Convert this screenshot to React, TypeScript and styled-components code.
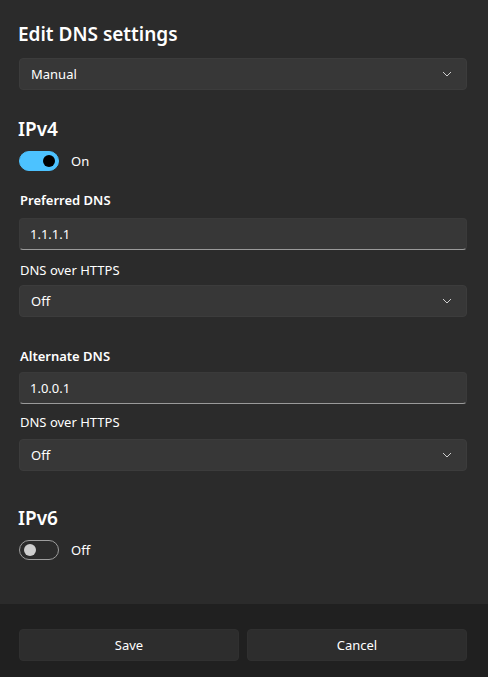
import styled, { createGlobalStyle } from "styled-components";

const GlobalStyle = createGlobalStyle`
  html, body {
    margin: 0;
    padding: 0;
    background: #202020;
  }
  body {
    font-family: "Segoe UI", "Noto Sans", "Liberation Sans", sans-serif;
    color: #ffffff;
    -webkit-font-smoothing: antialiased;
  }
`;

const Dialog = styled.div`
  width: 488px;
  height: 677px;
  display: flex;
  flex-direction: column;
  overflow: hidden;
`;

const Content = styled.div`
  flex: 1;
  background: #2b2b2b;
  padding: 20px 21px 0 19px;
  display: flex;
  flex-direction: column;
`;

const Title = styled.h2<{ mt?: number }>`
  margin: ${({ mt }) => mt || 0}px 0 0 -1px;
  font-size: 19px;
  line-height: 28px;
  font-weight: 600;
  color: #ffffff;
`;

const Label = styled.div<{ mt: number; bold?: boolean }>`
  margin-top: ${({ mt }) => mt}px;
  margin-left: 1px;
  font-size: 13px;
  line-height: 20px;
  font-weight: ${({ bold }) => (bold ? 600 : 400)};
  color: #ffffff;
`;

const Select = styled.div<{ mt: number }>`
  margin-top: ${({ mt }) => mt}px;
  height: 32px;
  box-sizing: border-box;
  border-radius: 4px;
  background: #373737;
  border: 1px solid #3c3c3c;
  display: flex;
  align-items: center;
  justify-content: space-between;
  padding: 0 14px 0 11px;
  font-size: 13px;
  color: #ffffff;
`;

const TextBox = styled.div<{ mt: number }>`
  margin-top: ${({ mt }) => mt}px;
  height: 32px;
  box-sizing: border-box;
  border-radius: 4px;
  background: #373737;
  border: 1px solid #3a3a3a;
  border-bottom: 1px solid #9a9a9a;
  display: flex;
  align-items: center;
  padding: 0 10px;
  font-size: 13px;
  color: #ffffff;
`;

const ToggleRow = styled.div<{ mt: number }>`
  margin-top: ${({ mt }) => mt}px;
  display: flex;
  align-items: center;
  gap: 12px;
  font-size: 13px;
  color: #ffffff;
`;

const Track = styled.div<{ on: boolean }>`
  width: 40px;
  height: 20px;
  box-sizing: border-box;
  border-radius: 10px;
  background: ${({ on }) => (on ? "#4cc2ff" : "transparent")};
  border: 1px solid ${({ on }) => (on ? "#4cc2ff" : "#9d9d9d")};
  display: flex;
  align-items: center;
  justify-content: ${({ on }) => (on ? "flex-end" : "flex-start")};
  padding: 0 3px 0 4px;
`;

const Knob = styled.div<{ on: boolean }>`
  width: 12px;
  height: 12px;
  border-radius: 50%;
  background: ${({ on }) => (on ? "#000000" : "#cecece")};
`;

const Footer = styled.div`
  height: 73px;
  box-sizing: border-box;
  background: #202020;
  padding: 25px 21px 0 19px;
  display: grid;
  grid-template-columns: 1fr 1fr;
  gap: 8px;
  align-items: start;
`;

const Button = styled.button`
  height: 32px;
  border-radius: 4px;
  background: #2d2d2d;
  border: 1px solid #303030;
  color: #ffffff;
  font-family: inherit;
  font-size: 13px;
`;

const Chevron = () => (
  <svg width="10" height="6" viewBox="0 0 10 6">
    <path d="M1 1 L5 5 L9 1" fill="none" stroke="#cfcfcf" strokeWidth="1" />
  </svg>
);

const Dropdown = ({ value, mt }: { value: string; mt: number }) => (
  <Select mt={mt}>
    <span>{value}</span>
    <Chevron />
  </Select>
);

const Toggle = ({ on, mt }: { on: boolean; mt: number }) => (
  <ToggleRow mt={mt}>
    <Track on={on}>
      <Knob on={on} />
    </Track>
    <span>{on ? "On" : "Off"}</span>
  </ToggleRow>
);

export default function App() {
  return (
    <Dialog>
      <GlobalStyle />
      <Content>
        <Title>Edit DNS settings</Title>
        <Dropdown value="Manual" mt={10} />

        <Title mt={25}>IPv4</Title>
        <Toggle on mt={8} />

        <Label mt={19} bold>Preferred DNS</Label>
        <TextBox mt={8}>1.1.1.1</TextBox>
        <Label mt={10}>DNS over HTTPS</Label>
        <Dropdown value="Off" mt={5} />

        <Label mt={29} bold>Alternate DNS</Label>
        <TextBox mt={6}>1.0.0.1</TextBox>
        <Label mt={8}>DNS over HTTPS</Label>
        <Dropdown value="Off" mt={7} />

        <Title mt={33}>IPv6</Title>
        <Toggle on={false} mt={8} />
      </Content>
      <Footer>
        <Button>Save</Button>
        <Button>Cancel</Button>
      </Footer>
    </Dialog>
  );
}
